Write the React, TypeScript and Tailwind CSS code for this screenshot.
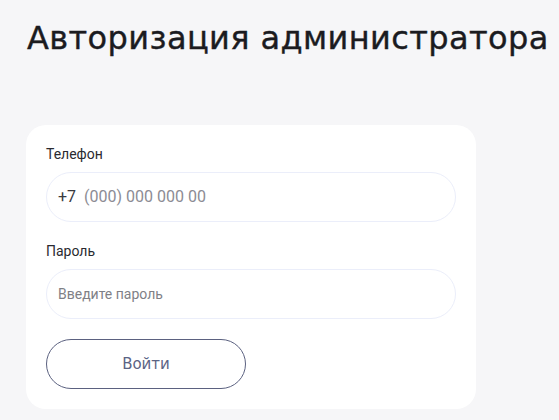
import React from 'react';

const App: React.FC = () => {
    return (
        <div className="min-h-screen w-full bg-[#f6f6f8] px-[26px] pt-[14px]" style={{ fontFamily: 'Roboto, "Noto Sans", sans-serif' }}>
            {/* Title */}
            <h1 className="whitespace-nowrap text-[32px] leading-[48px] font-medium text-[#1b1b1f] pl-[1px] tracking-[0.4px]" style={{ fontFamily: '"DejaVu Sans", sans-serif', WebkitTextStroke: '0.4px #1b1b1f' }}>
                Авторизация администратора
            </h1>

            {/* Form card */}
            <div className="mt-[63px] w-[450px] rounded-[20px] bg-white px-[20px] pt-[20px] pb-[20px]">
                <label className="block text-[14px] leading-[18px] text-[#2a2a30]">Телефон</label>
                <div className="mt-[9px] flex h-[50px] w-[410px] items-center rounded-full border border-[#ebeefa] px-[11px] text-[16px]">
                    <span className="text-[#3a3a40]">+7</span>
                    <span className="ml-[8px] text-[#8c8c94]">(000) 000 000 00</span>
                </div>

                <label className="mt-[20px] block text-[14px] leading-[18px] text-[#2a2a30]">Пароль</label>
                <div className="mt-[9px] flex h-[50px] w-[410px] items-center rounded-full border border-[#ebeefa] px-[11px] text-[14px] text-[#7f7f86]">
                    Введите пароль
                </div>

                <button className="mt-[20px] flex h-[50px] w-[200px] items-center justify-center rounded-full border border-[#5b6180] text-[15px] text-[#5b6384]" style={{ fontFamily: '"DejaVu Sans", sans-serif' }}>
                    Войти
                </button>
            </div>
        </div>
    );
};

export default App;
